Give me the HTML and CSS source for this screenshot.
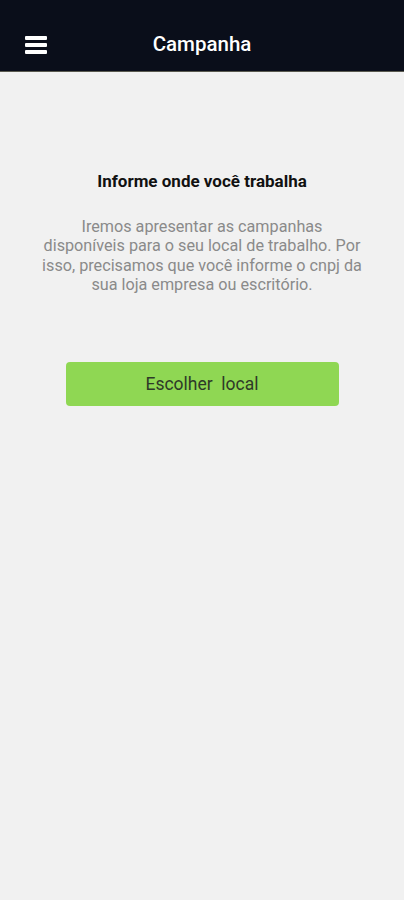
FILE: index.html
```html
<!DOCTYPE html>
<html lang="pt-BR">
<head>
    <meta charset="UTF-8">
    <meta name="viewport" content="width=device-width, initial-scale=1.0">
    <title>Campanha</title>
    <link rel="stylesheet" href="styles.css">
</head>
<body>
    <header class="topbar">
        <button class="menu-btn" aria-label="Menu">
            <svg width="22" height="18" viewBox="0 0 22 18">
                <rect x="0" y="0" width="22" height="4" rx="1" fill="#fff"/>
                <rect x="0" y="7" width="22" height="4" rx="1" fill="#fff"/>
                <rect x="0" y="14" width="22" height="4" rx="1" fill="#fff"/>
            </svg>
        </button>
        <h1 class="topbar-title">Campanha</h1>
    </header>

    <main class="content">
        <h2 class="content-title">Informe onde você trabalha</h2>
        <p class="content-text">Iremos apresentar as campanhas<br>disponíveis para o seu local de trabalho. Por<br>isso, precisamos que você informe o cnpj da<br>sua loja empresa ou escritório.</p>
        <button class="choose-btn">Escolher&nbsp; local</button>
    </main>
</body>
</html>
```

FILE: styles.css
```css
body {
    margin: 0;
    font-family: Roboto, "Liberation Sans", Arial, sans-serif;
    background-color: #f1f1f1;
    min-height: 900px;
}
.topbar {
    position: relative;
    height: 71px;
    background-color: #0a0e1a;
    border-bottom: 1px solid #5a5a50;
    display: flex;
    align-items: center;
    justify-content: center;
}
.menu-btn {
    position: absolute;
    left: 25px;
    top: 36px;
    padding: 0;
    border: none;
    background: none;
    line-height: 0;
}
.topbar-title {
    margin: 16px 0 0;
    color: #fff;
    font-size: 20.5px;
    font-weight: 500;
}
.content {
    display: flex;
    flex-direction: column;
    align-items: center;
    padding: 0 10px;
}
.content-title {
    margin: 99px 0 0;
    font-size: 17px;
    font-weight: 700;
    color: #111;
}
.content-text {
    margin: 26px 0 0;
    text-align: center;
    font-size: 16.2px;
    line-height: 19.3px;
    color: #8a8a8a;
}
.choose-btn {
    margin-top: 68px;
    width: 273px;
    height: 44px;
    border: none;
    border-radius: 4px;
    background-color: #8fd753;
    color: #2e3a28;
    font-family: inherit;
    font-size: 17.5px;
}
```
